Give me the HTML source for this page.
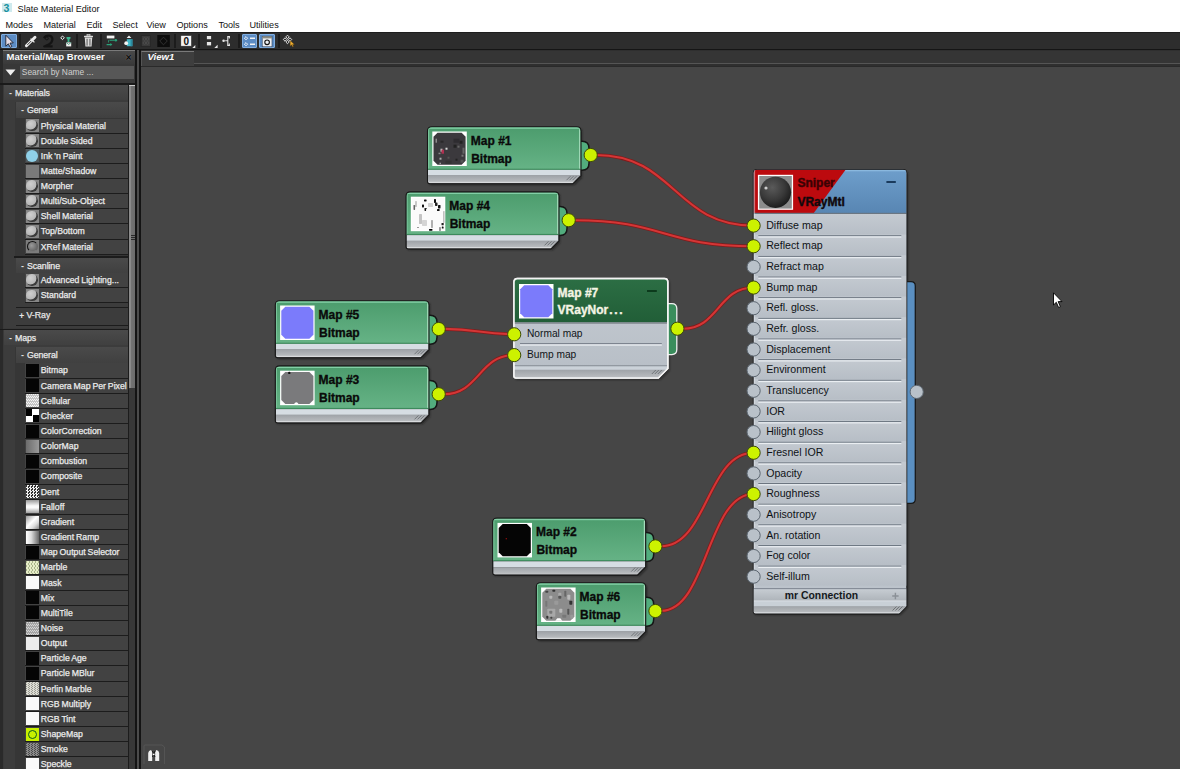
<!DOCTYPE html><html><head><meta charset="utf-8"><style>
*{margin:0;padding:0;box-sizing:border-box}
html,body{width:1180px;height:769px;overflow:hidden;background:#464646;font-family:"Liberation Sans",sans-serif}
.ab{position:absolute}
.t{position:absolute;white-space:nowrap;line-height:1}
.lt{color:#e6e6e6;font-size:9px}

</style></head><body>
<div class="ab" style="left:0px;top:0px;width:1180px;height:32px;background:#fff"></div>
<div class="ab" style="left:2px;top:2.5px;width:10.2px;height:9.8px;background:#cfeaee"></div>
<div class="t" style="left:3.6px;top:2.6px;font-size:10.5px;font-weight:bold;color:#17909e">3</div>
<div class="t" style="left:17.6px;top:4.9px;font-size:9.1px;color:#111">Slate Material Editor</div>
<div class="t" style="left:5.4px;top:20.5px;font-size:9.1px;color:#111">Modes</div>
<div class="t" style="left:43.4px;top:20.5px;font-size:9.1px;color:#111">Material</div>
<div class="t" style="left:86.4px;top:20.5px;font-size:9.1px;color:#111">Edit</div>
<div class="t" style="left:112.4px;top:20.5px;font-size:9.1px;color:#111">Select</div>
<div class="t" style="left:146.4px;top:20.5px;font-size:9.1px;color:#111">View</div>
<div class="t" style="left:176.4px;top:20.5px;font-size:9.1px;color:#111">Options</div>
<div class="t" style="left:218.4px;top:20.5px;font-size:9.1px;color:#111">Tools</div>
<div class="t" style="left:249.4px;top:20.5px;font-size:9.1px;color:#111">Utilities</div>
<div class="ab" style="left:0px;top:32px;width:1180px;height:18px;background:#2d2d2d"></div>
<div class="ab" style="left:0px;top:32px;width:1180px;height:1px;background:#1e1e1e"></div>
<div class="ab" style="left:0px;top:49px;width:1180px;height:1px;background:#151515"></div>
<div class="ab" style="left:19px;top:34px;width:2px;height:14px;background:#1c1c1c"></div>
<div class="ab" style="left:76px;top:34px;width:2px;height:14px;background:#1c1c1c"></div>
<div class="ab" style="left:100px;top:34px;width:2px;height:14px;background:#1c1c1c"></div>
<div class="ab" style="left:174px;top:34px;width:2px;height:14px;background:#1c1c1c"></div>
<div class="ab" style="left:198px;top:34px;width:2px;height:14px;background:#1c1c1c"></div>
<div class="ab" style="left:238px;top:34px;width:2px;height:14px;background:#1c1c1c"></div>
<div class="ab" style="left:278px;top:34px;width:2px;height:14px;background:#1c1c1c"></div>
<div class="ab" style="left:1px;top:33.8px;width:15.5px;height:14.5px;background:#5c8cc4;border:1px solid #80aee0;border-radius:1px"></div>
<div class="ab" style="left:241.7px;top:33.8px;width:15px;height:14.5px;background:#5c8cc4;border:1px solid #80aee0;border-radius:1px"></div>
<div class="ab" style="left:259.3px;top:33.8px;width:15.7px;height:14.5px;background:#5c8cc4;border:1px solid #80aee0;border-radius:1px"></div>

<svg class="ab" style="left:0;top:32px" width="300" height="18" viewBox="0 32 300 18">
 <!-- arrow -->
 <path d="M5.8 35.2 L5.8 46.2 L8.3 43.8 L10.2 47.4 L11.8 46.6 L10 43.1 L13.3 42.9 Z" fill="#e6dde6" stroke="#1c2230" stroke-width="0.9"/>
 <!-- eyedropper -->
 <path d="M26.4 45.8 L35 37.2" stroke="#ececec" stroke-width="2.9" stroke-linecap="round"/>
 <path d="M27.3 44.9 L31.2 41" stroke="#3a3a3a" stroke-width="1"/>
 <path d="M30.6 38.6 L34.4 42.4" stroke="#ececec" stroke-width="1.3"/>
 <!-- spiral dark -->
 <path d="M44 38.2 Q45.5 35.2 49 35.6 Q52.6 36.2 52.4 39.6 Q52 43 48.6 44.6 L44.2 46.4 L52.6 46.4" stroke="#141414" stroke-width="2.2" fill="none" stroke-linejoin="round"/>
 <circle cx="46.8" cy="38.4" r="1.5" fill="none" stroke="#141414" stroke-width="0.9"/>
 <!-- pick icon -->
 <path d="M62.5 36 L64.3 37.8 L62.5 39.6 L60.7 37.8 Z" fill="none" stroke="#f2f2f2" stroke-width="1"/>
 <path d="M66.5 37 L70.5 37 L70.5 38.5 L69.4 39.5 L69.4 42 L67.6 42 L67.6 39.5 L66.5 38.5 Z" fill="#3ab58e"/>
 <rect x="66.2" y="42.4" width="5" height="4" fill="#f4f4f4"/>
 <path d="M66.2 42.4 L68.7 44.4 L71.2 42.4" stroke="#2a8a6a" stroke-width="0.8" fill="none"/>
 <!-- trash -->
 <path d="M84.8 37.6 L92.2 37.6 L91.6 46.6 L85.4 46.6 Z" fill="#dcdcdc"/>
 <rect x="84" y="35.8" width="9" height="1.4" fill="#dcdcdc" rx="0.5"/>
 <rect x="87" y="34.6" width="3" height="1.3" fill="none" stroke="#dcdcdc" stroke-width="0.7"/>
 <rect x="86.6" y="38.8" width="0.9" height="6.8" fill="#444"/><rect x="89.5" y="38.8" width="0.9" height="6.8" fill="#444"/>
 <!-- layout icon -->
 <rect x="106.8" y="35.6" width="7.6" height="2.8" fill="#f0f0f0"/>
 <path d="M109.5 40.2 L114.5 40.2 M106.6 44.6 L111.4 44.6" stroke="#2aa47c" stroke-width="1.1"/>
 <circle cx="115.8" cy="40.2" r="1.3" fill="#2aa47c"/>
 <path d="M110.3 43.1 L112.3 44.6 L110.3 46.1 Z" fill="#2aa47c"/>
 <path d="M108.5 40.2 L108.5 42.5" stroke="#2aa47c" stroke-width="0.8"/>
 <!-- icon -->
 <path d="M129 35.5 L131.4 38 L126.6 38 Z" fill="#f0f0f0"/>
 <rect x="126.8" y="39.2" width="5.6" height="7" fill="#44b8c8"/>
 <rect x="130.5" y="39.2" width="1.9" height="7" fill="#2a8aa0"/>
 <circle cx="126.2" cy="43.2" r="1.9" fill="#f4f4f4"/>
 <!-- dim squares -->
 <rect x="141.2" y="35.6" width="9.4" height="11" fill="#3a3a3a" stroke="#262626" stroke-width="0.8"/>
 <circle cx="144.5" cy="39" r="1.4" fill="none" stroke="#555" stroke-width="0.6"/><circle cx="147.5" cy="39" r="1.4" fill="none" stroke="#555" stroke-width="0.6"/>
 <circle cx="144.5" cy="43" r="1.4" fill="none" stroke="#555" stroke-width="0.6"/><circle cx="147.5" cy="43" r="1.4" fill="none" stroke="#555" stroke-width="0.6"/>
 <rect x="157.3" y="35" width="12.5" height="12" fill="#0c0c0c"/>
 <path d="M163.5 37.2 L167.3 41 L163.5 44.8 L159.7 41 Z" fill="none" stroke="#3a3a3a" stroke-width="0.8"/>
 <!-- 0 button -->
 <rect x="180.8" y="35.4" width="10.8" height="10.8" fill="#f4f4f4" stroke="#222" stroke-width="0.6"/>
 <text x="186.2" y="44.6" font-family="Liberation Sans" font-weight="bold" font-size="10" text-anchor="middle" fill="#111">0</text>
 <path d="M192.3 48 L195.3 45 L195.3 48 Z" fill="#e6e6e6"/>
 <!-- two squares -->
 <rect x="206.9" y="36" width="4.2" height="3.2" fill="#e6e6e6"/>
 <rect x="206.9" y="42" width="4.2" height="3.4" fill="#e6e6e6"/>
 <path d="M214.3 48 L217.6 44.8 L217.6 48 Z" fill="#e6e6e6"/>
 <!-- tree icon -->
 <path d="M227.8 36.2 L227.8 45.8 M227.2 36.6 L229.8 36.6 M227.2 45.4 L229.8 45.4 M225.2 40.8 L227.8 40.8" stroke="#e6e6e6" stroke-width="1.1" fill="none"/>
 <path d="M229.3 36 L229.3 38.5 M229.3 43.5 L229.3 46" stroke="#e6e6e6" stroke-width="1.1"/>
 <circle cx="223.6" cy="40.8" r="1.3" fill="#e6e6e6"/>
 <!-- blue btn icons -->
 <g fill="none" stroke="#fff" stroke-width="0.9">
 <path d="M246 36.6 L247.6 38.2 L246 39.8 L244.4 38.2 Z"/><path d="M246 42.6 L247.6 44.2 L246 45.8 L244.4 44.2 Z"/>
 </g>
 <path d="M250 38.2 L255 38.2 M250 44.2 L255 44.2" stroke="#f4f4f4" stroke-width="1.4"/>
 <rect x="262.2" y="36.4" width="9.8" height="10.4" fill="#eef0f4" stroke="#2a3a50" stroke-width="0.6"/>
 <rect x="262.2" y="36.4" width="9.8" height="2" fill="#8a8a80"/>
 <circle cx="267.1" cy="42.3" r="2.3" fill="none" stroke="#111" stroke-width="1.1"/>
 <!-- last icon -->
 <g fill="none" stroke="#f0f0f0" stroke-width="0.9">
 <path d="M287.5 35.2 L289.2 36.9 L287.5 38.6 L285.8 36.9 Z"/><path d="M285 37.8 L286.7 39.5 L285 41.2 L283.3 39.5 Z"/>
 <path d="M290 37.8 L291.7 39.5 L290 41.2 L288.3 39.5 Z"/><path d="M287.5 40.3 L289.2 42 L287.5 43.7 L285.8 42 Z"/>
 </g>
 <path d="M290.2 40.6 L290.2 46 L291.6 44.8 L292.6 46.8 L293.4 46.4 L292.5 44.5 L294.3 44.4 Z" fill="#f2b030" stroke="#6a4a10" stroke-width="0.4"/>
</svg>

<div class="ab" style="left:0px;top:50px;width:141px;height:719px;background:#2a2a2a"></div>
<div class="ab" style="left:3px;top:50px;width:133px;height:14px;background:linear-gradient(#484848,#3a3a3a);border-top:1px solid #7a7a7a"></div>
<div class="t" style="left:6.6px;top:51.6px;font-size:9.5px;font-weight:bold;color:#fafafa">Material/Map Browser</div>
<div class="t" style="left:125.6px;top:51.6px;font-size:10.5px;font-weight:bold;color:#0c0c0c;text-shadow:0 0 1px #888">×</div>
<div class="ab" style="left:3px;top:64px;width:133px;height:19px;background:#383838"></div>
<svg class="ab" style="left:5px;top:69px" width="11" height="7"><path d="M0.5 0.5 L10.5 0.5 L5.5 6.5 Z" fill="#eee"/></svg>
<div class="ab" style="left:20px;top:66px;width:114px;height:13px;background:#575757"></div>
<div class="t" style="left:21.8px;top:68.2px;font-size:8.4px;color:#d0d0d0">Search by Name ...</div>
<div class="ab" style="left:0px;top:83px;width:136px;height:1.5px;background:#1a1a1a"></div>
<div class="ab" style="left:3px;top:84.5px;width:125px;height:684.5px;background:#393939"></div>
<div class="ab" style="left:127.6px;top:84.5px;width:1.4px;height:684.5px;background:#1c1c1c"></div>
<div class="ab" style="left:129px;top:84.5px;width:6px;height:684.5px;background:#383838"></div>
<div class="ab" style="left:129px;top:84.6px;width:6.5px;height:303.4px;background:linear-gradient(90deg,#8c8c8c,#888 30%,#727272 35%,#6a6a6a);border-top:1px solid #ccc"></div>
<div class="ab" style="left:131px;top:234.5px;width:4px;height:1px;background:#2a2a2a"></div>
<div class="ab" style="left:131px;top:237px;width:4px;height:1px;background:#2a2a2a"></div>
<div class="ab" style="left:131px;top:239.2px;width:4px;height:1px;background:#2a2a2a"></div>
<div class="ab" style="left:135px;top:50px;width:1.6px;height:719px;background:#141414"></div>
<div class="ab" style="left:136.6px;top:50px;width:2.5px;height:719px;background:#4c4c4c"></div>
<div class="ab" style="left:139.1px;top:50px;width:2px;height:719px;background:#141414"></div>
<div class="ab" style="left:4px;top:85px;width:123.6px;height:243px;background:#3c3c3c"></div>
<div class="ab" style="left:4px;top:85px;width:123.6px;height:15px;background:linear-gradient(#4a4a4a,#404040)"></div>
<div class="t" style="left:9px;top:88.5px;font-size:9px;color:#ddd;font-weight:bold">-</div>
<div class="t" style="left:15px;top:89.0px;font-size:8.8px;color:#f0f0f0;letter-spacing:-0.1px;-webkit-text-stroke:0.25px #e6e6e6">Materials</div>
<div class="ab" style="left:15px;top:101.5px;width:112.6px;height:155px;background:#363636"></div>
<div class="ab" style="left:16px;top:102px;width:111.6px;height:15.5px;background:linear-gradient(#4a4a4a,#404040)"></div>
<div class="t" style="left:21px;top:105.5px;font-size:9px;color:#ddd;font-weight:bold">-</div>
<div class="t" style="left:27px;top:106.0px;font-size:8.8px;color:#f0f0f0;letter-spacing:-0.1px;-webkit-text-stroke:0.25px #e6e6e6">General</div>
<div class="ab" style="left:25px;top:118.6px;width:102.6px;height:15.125px;background:#424242;border-bottom:1.5px solid #1c1c1c"></div>
<div class="ab" style="left:25.5px;top:119.19999999999999px;width:13px;height:13px;background:#868686"><div class="ab" style="left:0.8px;top:0.6px;width:11.4px;height:11.6px;border-radius:50%;background:radial-gradient(circle at 38% 34%,#cfcfcf,#b4b4b4 60%,#9a9a9a);box-shadow:inset -1.6px -1.6px 0.6px #3a3a3a"></div></div>
<div class="t" style="left:40.8px;top:121.6px;font-size:8.7px;color:#f0f0f0;word-spacing:-0.5px;-webkit-text-stroke:0.25px #e8e8e8">Physical Material</div>
<div class="ab" style="left:25px;top:133.725px;width:102.6px;height:15.125px;background:#424242;border-bottom:1.5px solid #1c1c1c"></div>
<div class="ab" style="left:25.5px;top:134.325px;width:13px;height:13px;background:#868686"><div class="ab" style="left:0.8px;top:0.6px;width:11.4px;height:11.6px;border-radius:50%;background:radial-gradient(circle at 38% 34%,#cfcfcf,#b4b4b4 60%,#9a9a9a);box-shadow:inset -1.6px -1.6px 0.6px #3a3a3a"></div></div>
<div class="t" style="left:40.8px;top:136.725px;font-size:8.7px;color:#f0f0f0;word-spacing:-0.5px;-webkit-text-stroke:0.25px #e8e8e8">Double Sided</div>
<div class="ab" style="left:25px;top:148.85px;width:102.6px;height:15.125px;background:#424242;border-bottom:1.5px solid #1c1c1c"></div>
<div class="ab" style="left:25.5px;top:149.45px;width:13px;height:13px;background:#505a5e"><div class="ab" style="left:0.5px;top:0.5px;width:12px;height:12px;border-radius:50%;background:#8fd0e8"></div></div>
<div class="t" style="left:40.8px;top:151.85px;font-size:8.7px;color:#f0f0f0;word-spacing:-0.5px;-webkit-text-stroke:0.25px #e8e8e8">Ink 'n Paint</div>
<div class="ab" style="left:25px;top:163.975px;width:102.6px;height:15.125px;background:#424242;border-bottom:1.5px solid #1c1c1c"></div>
<div class="ab" style="left:25.5px;top:164.575px;width:13px;height:13px;background:#7a7a7a"></div>
<div class="t" style="left:40.8px;top:166.975px;font-size:8.7px;color:#f0f0f0;word-spacing:-0.5px;-webkit-text-stroke:0.25px #e8e8e8">Matte/Shadow</div>
<div class="ab" style="left:25px;top:179.1px;width:102.6px;height:15.125px;background:#424242;border-bottom:1.5px solid #1c1c1c"></div>
<div class="ab" style="left:25.5px;top:179.7px;width:13px;height:13px;background:#868686"><div class="ab" style="left:0.8px;top:0.6px;width:11.4px;height:11.6px;border-radius:50%;background:radial-gradient(circle at 38% 34%,#cfcfcf,#b4b4b4 60%,#9a9a9a);box-shadow:inset -1.6px -1.6px 0.6px #3a3a3a"></div></div>
<div class="t" style="left:40.8px;top:182.1px;font-size:8.7px;color:#f0f0f0;word-spacing:-0.5px;-webkit-text-stroke:0.25px #e8e8e8">Morpher</div>
<div class="ab" style="left:25px;top:194.225px;width:102.6px;height:15.125px;background:#424242;border-bottom:1.5px solid #1c1c1c"></div>
<div class="ab" style="left:25.5px;top:194.825px;width:13px;height:13px;background:#868686"><div class="ab" style="left:0.8px;top:0.6px;width:11.4px;height:11.6px;border-radius:50%;background:radial-gradient(circle at 38% 34%,#cfcfcf,#b4b4b4 60%,#9a9a9a);box-shadow:inset -1.6px -1.6px 0.6px #3a3a3a"></div></div>
<div class="t" style="left:40.8px;top:197.225px;font-size:8.7px;color:#f0f0f0;word-spacing:-0.5px;-webkit-text-stroke:0.25px #e8e8e8">Multi/Sub-Object</div>
<div class="ab" style="left:25px;top:209.35px;width:102.6px;height:15.125px;background:#424242;border-bottom:1.5px solid #1c1c1c"></div>
<div class="ab" style="left:25.5px;top:209.95px;width:13px;height:13px;background:#868686"><div class="ab" style="left:0.8px;top:0.6px;width:11.4px;height:11.6px;border-radius:50%;background:radial-gradient(circle at 38% 34%,#cfcfcf,#b4b4b4 60%,#9a9a9a);box-shadow:inset -1.6px -1.6px 0.6px #3a3a3a"></div></div>
<div class="t" style="left:40.8px;top:212.35px;font-size:8.7px;color:#f0f0f0;word-spacing:-0.5px;-webkit-text-stroke:0.25px #e8e8e8">Shell Material</div>
<div class="ab" style="left:25px;top:224.475px;width:102.6px;height:15.125px;background:#424242;border-bottom:1.5px solid #1c1c1c"></div>
<div class="ab" style="left:25.5px;top:225.075px;width:13px;height:13px;background:#868686"><div class="ab" style="left:0.8px;top:0.6px;width:11.4px;height:11.6px;border-radius:50%;background:radial-gradient(circle at 38% 34%,#cfcfcf,#b4b4b4 60%,#9a9a9a);box-shadow:inset -1.6px -1.6px 0.6px #3a3a3a"></div></div>
<div class="t" style="left:40.8px;top:227.475px;font-size:8.7px;color:#f0f0f0;word-spacing:-0.5px;-webkit-text-stroke:0.25px #e8e8e8">Top/Bottom</div>
<div class="ab" style="left:25px;top:239.6px;width:102.6px;height:15.125px;background:#424242;border-bottom:1.5px solid #1c1c1c"></div>
<div class="ab" style="left:25.5px;top:240.2px;width:13px;height:13px;background:#7c7c7c"><div class="ab" style="left:1.2px;top:1px;width:11px;height:11px;border-radius:50%;border:1px solid #111;border-right-color:#666;border-bottom-color:#777;background:radial-gradient(circle at 40% 40%,#9a9a9a,#6a6a6a 70%)"></div></div>
<div class="t" style="left:40.8px;top:242.6px;font-size:8.7px;color:#f0f0f0;word-spacing:-0.5px;-webkit-text-stroke:0.25px #e8e8e8">XRef Material</div>
<div class="ab" style="left:14px;top:256px;width:113.6px;height:1.8px;background:#1c1c1c"></div>
<div class="ab" style="left:16px;top:258px;width:111.6px;height:15px;background:linear-gradient(#4a4a4a,#404040)"></div>
<div class="t" style="left:21px;top:261.5px;font-size:9px;color:#ddd;font-weight:bold">-</div>
<div class="t" style="left:27px;top:262.0px;font-size:8.8px;color:#f0f0f0;letter-spacing:-0.1px;-webkit-text-stroke:0.25px #e6e6e6">Scanline</div>
<div class="ab" style="left:25px;top:273.2px;width:102.6px;height:15.125px;background:#424242;border-bottom:1.5px solid #1c1c1c"></div>
<div class="ab" style="left:25.5px;top:273.8px;width:13px;height:13px;background:#868686"><div class="ab" style="left:0.8px;top:0.6px;width:11.4px;height:11.6px;border-radius:50%;background:radial-gradient(circle at 38% 34%,#cfcfcf,#b4b4b4 60%,#9a9a9a);box-shadow:inset -1.6px -1.6px 0.6px #3a3a3a"></div></div>
<div class="t" style="left:40.8px;top:276.2px;font-size:8.7px;color:#f0f0f0;word-spacing:-0.5px;-webkit-text-stroke:0.25px #e8e8e8">Advanced Lighting...</div>
<div class="ab" style="left:25px;top:288.325px;width:102.6px;height:15.125px;background:#424242;border-bottom:1.5px solid #1c1c1c"></div>
<div class="ab" style="left:25.5px;top:288.925px;width:13px;height:13px;background:#868686"><div class="ab" style="left:0.8px;top:0.6px;width:11.4px;height:11.6px;border-radius:50%;background:radial-gradient(circle at 38% 34%,#cfcfcf,#b4b4b4 60%,#9a9a9a);box-shadow:inset -1.6px -1.6px 0.6px #3a3a3a"></div></div>
<div class="t" style="left:40.8px;top:291.325px;font-size:8.7px;color:#f0f0f0;word-spacing:-0.5px;-webkit-text-stroke:0.25px #e8e8e8">Standard</div>
<div class="ab" style="left:16px;top:306.5px;width:111.6px;height:19px;background:#3c3c3c;border-top:1.5px solid #1c1c1c;border-bottom:1.5px solid #1c1c1c"></div>
<div class="t" style="left:19px;top:311.5px;font-size:9px;color:#e6e6e6;font-weight:bold">+</div>
<div class="t" style="left:26.4px;top:311.2px;font-size:8.8px;color:#ececec;-webkit-text-stroke:0.25px #e0e0e0">V-Ray</div>
<div class="ab" style="left:0px;top:328.5px;width:128px;height:1.5px;background:#1a1a1a"></div>
<div class="ab" style="left:4px;top:330px;width:123.6px;height:439px;background:#3c3c3c"></div>
<div class="ab" style="left:4px;top:330px;width:123.6px;height:15px;background:linear-gradient(#4a4a4a,#404040)"></div>
<div class="t" style="left:9px;top:333.5px;font-size:9px;color:#ddd;font-weight:bold">-</div>
<div class="t" style="left:15px;top:334.0px;font-size:8.8px;color:#f0f0f0;letter-spacing:-0.1px;-webkit-text-stroke:0.25px #e6e6e6">Maps</div>
<div class="ab" style="left:15px;top:346.5px;width:112.6px;height:423px;background:#363636"></div>
<div class="ab" style="left:16px;top:347px;width:111.6px;height:15.5px;background:linear-gradient(#4a4a4a,#404040)"></div>
<div class="t" style="left:21px;top:350.5px;font-size:9px;color:#ddd;font-weight:bold">-</div>
<div class="t" style="left:27px;top:351.0px;font-size:8.8px;color:#f0f0f0;letter-spacing:-0.1px;-webkit-text-stroke:0.25px #e6e6e6">General</div>
<div class="ab" style="left:25px;top:363.4px;width:102.6px;height:15.15px;background:#424242;border-bottom:1.5px solid #1c1c1c"></div>
<div class="ab" style="left:25.5px;top:364.0px;width:13px;height:13px;background:#050505"></div>
<div class="t" style="left:40.8px;top:366.4px;font-size:8.7px;color:#f0f0f0;word-spacing:-0.5px;-webkit-text-stroke:0.25px #e8e8e8">Bitmap</div>
<div class="ab" style="left:25px;top:378.54999999999995px;width:102.6px;height:15.15px;background:#424242;border-bottom:1.5px solid #1c1c1c"></div>
<div class="ab" style="left:25.5px;top:379.15px;width:13px;height:13px;background:#050505"></div>
<div class="t" style="left:40.8px;top:381.54999999999995px;font-size:8.7px;color:#f0f0f0;word-spacing:-0.5px;-webkit-text-stroke:0.25px #e8e8e8">Camera Map Per Pixel</div>
<div class="ab" style="left:25px;top:393.7px;width:102.6px;height:15.15px;background:#424242;border-bottom:1.5px solid #1c1c1c"></div>
<div class="ab" style="left:25.5px;top:394.3px;width:13px;height:13px;background:repeating-conic-gradient(#f4f4f4 0 25%,#c4c4c4 0 50%) 0 0/2px 3px"></div>
<div class="t" style="left:40.8px;top:396.7px;font-size:8.7px;color:#f0f0f0;word-spacing:-0.5px;-webkit-text-stroke:0.25px #e8e8e8">Cellular</div>
<div class="ab" style="left:25px;top:408.84999999999997px;width:102.6px;height:15.15px;background:#424242;border-bottom:1.5px solid #1c1c1c"></div>
<div class="ab" style="left:25.5px;top:409.45px;width:13px;height:13px;background:conic-gradient(#fff 0 25%,#000 0 50%,#fff 0 75%,#000 0)"></div>
<div class="t" style="left:40.8px;top:411.84999999999997px;font-size:8.7px;color:#f0f0f0;word-spacing:-0.5px;-webkit-text-stroke:0.25px #e8e8e8">Checker</div>
<div class="ab" style="left:25px;top:424.0px;width:102.6px;height:15.15px;background:#424242;border-bottom:1.5px solid #1c1c1c"></div>
<div class="ab" style="left:25.5px;top:424.6px;width:13px;height:13px;background:#050505"></div>
<div class="t" style="left:40.8px;top:427.0px;font-size:8.7px;color:#f0f0f0;word-spacing:-0.5px;-webkit-text-stroke:0.25px #e8e8e8">ColorCorrection</div>
<div class="ab" style="left:25px;top:439.15px;width:102.6px;height:15.15px;background:#424242;border-bottom:1.5px solid #1c1c1c"></div>
<div class="ab" style="left:25.5px;top:439.75px;width:13px;height:13px;background:linear-gradient(90deg,#6c6c6c,#9a9a9a)"></div>
<div class="t" style="left:40.8px;top:442.15px;font-size:8.7px;color:#f0f0f0;word-spacing:-0.5px;-webkit-text-stroke:0.25px #e8e8e8">ColorMap</div>
<div class="ab" style="left:25px;top:454.29999999999995px;width:102.6px;height:15.15px;background:#424242;border-bottom:1.5px solid #1c1c1c"></div>
<div class="ab" style="left:25.5px;top:454.9px;width:13px;height:13px;background:#050505"></div>
<div class="t" style="left:40.8px;top:457.29999999999995px;font-size:8.7px;color:#f0f0f0;word-spacing:-0.5px;-webkit-text-stroke:0.25px #e8e8e8">Combustion</div>
<div class="ab" style="left:25px;top:469.45px;width:102.6px;height:15.15px;background:#424242;border-bottom:1.5px solid #1c1c1c"></div>
<div class="ab" style="left:25.5px;top:470.05px;width:13px;height:13px;background:#050505"></div>
<div class="t" style="left:40.8px;top:472.45px;font-size:8.7px;color:#f0f0f0;word-spacing:-0.5px;-webkit-text-stroke:0.25px #e8e8e8">Composite</div>
<div class="ab" style="left:25px;top:484.59999999999997px;width:102.6px;height:15.15px;background:#424242;border-bottom:1.5px solid #1c1c1c"></div>
<div class="ab" style="left:25.5px;top:485.2px;width:13px;height:13px;background:repeating-conic-gradient(#f0f0f0 0 25%,#303030 0 50%) 0 0/3px 3px"></div>
<div class="t" style="left:40.8px;top:487.59999999999997px;font-size:8.7px;color:#f0f0f0;word-spacing:-0.5px;-webkit-text-stroke:0.25px #e8e8e8">Dent</div>
<div class="ab" style="left:25px;top:499.75px;width:102.6px;height:15.15px;background:#424242;border-bottom:1.5px solid #1c1c1c"></div>
<div class="ab" style="left:25.5px;top:500.35px;width:13px;height:13px;background:linear-gradient(#9a9a9a,#fafafa 45%,#fafafa 60%,#a0a0a0)"></div>
<div class="t" style="left:40.8px;top:502.75px;font-size:8.7px;color:#f0f0f0;word-spacing:-0.5px;-webkit-text-stroke:0.25px #e8e8e8">Falloff</div>
<div class="ab" style="left:25px;top:514.9px;width:102.6px;height:15.15px;background:#424242;border-bottom:1.5px solid #1c1c1c"></div>
<div class="ab" style="left:25.5px;top:515.5px;width:13px;height:13px;background:linear-gradient(135deg,#999,#fff 45%,#ddd 70%,#888)"></div>
<div class="t" style="left:40.8px;top:517.9px;font-size:8.7px;color:#f0f0f0;word-spacing:-0.5px;-webkit-text-stroke:0.25px #e8e8e8">Gradient</div>
<div class="ab" style="left:25px;top:530.05px;width:102.6px;height:15.15px;background:#424242;border-bottom:1.5px solid #1c1c1c"></div>
<div class="ab" style="left:25.5px;top:530.65px;width:13px;height:13px;background:linear-gradient(90deg,#fff,#ddd 40%,#666)"></div>
<div class="t" style="left:40.8px;top:533.05px;font-size:8.7px;color:#f0f0f0;word-spacing:-0.5px;-webkit-text-stroke:0.25px #e8e8e8">Gradient Ramp</div>
<div class="ab" style="left:25px;top:545.2px;width:102.6px;height:15.15px;background:#424242;border-bottom:1.5px solid #1c1c1c"></div>
<div class="ab" style="left:25.5px;top:545.8000000000001px;width:13px;height:13px;background:#050505"></div>
<div class="t" style="left:40.8px;top:548.2px;font-size:8.7px;color:#f0f0f0;word-spacing:-0.5px;-webkit-text-stroke:0.25px #e8e8e8">Map Output Selector</div>
<div class="ab" style="left:25px;top:560.35px;width:102.6px;height:15.15px;background:#424242;border-bottom:1.5px solid #1c1c1c"></div>
<div class="ab" style="left:25.5px;top:560.95px;width:13px;height:13px;background:repeating-conic-gradient(#e6ecc8 0 25%,#a8b48a 0 50%) 0 0/3px 4px"></div>
<div class="t" style="left:40.8px;top:563.35px;font-size:8.7px;color:#f0f0f0;word-spacing:-0.5px;-webkit-text-stroke:0.25px #e8e8e8">Marble</div>
<div class="ab" style="left:25px;top:575.5px;width:102.6px;height:15.15px;background:#424242;border-bottom:1.5px solid #1c1c1c"></div>
<div class="ab" style="left:25.5px;top:576.1px;width:13px;height:13px;background:#fafafa"></div>
<div class="t" style="left:40.8px;top:578.5px;font-size:8.7px;color:#f0f0f0;word-spacing:-0.5px;-webkit-text-stroke:0.25px #e8e8e8">Mask</div>
<div class="ab" style="left:25px;top:590.65px;width:102.6px;height:15.15px;background:#424242;border-bottom:1.5px solid #1c1c1c"></div>
<div class="ab" style="left:25.5px;top:591.25px;width:13px;height:13px;background:#050505"></div>
<div class="t" style="left:40.8px;top:593.65px;font-size:8.7px;color:#f0f0f0;word-spacing:-0.5px;-webkit-text-stroke:0.25px #e8e8e8">Mix</div>
<div class="ab" style="left:25px;top:605.8px;width:102.6px;height:15.15px;background:#424242;border-bottom:1.5px solid #1c1c1c"></div>
<div class="ab" style="left:25.5px;top:606.4px;width:13px;height:13px;background:#050505"></div>
<div class="t" style="left:40.8px;top:608.8px;font-size:8.7px;color:#f0f0f0;word-spacing:-0.5px;-webkit-text-stroke:0.25px #e8e8e8">MultiTile</div>
<div class="ab" style="left:25px;top:620.95px;width:102.6px;height:15.15px;background:#424242;border-bottom:1.5px solid #1c1c1c"></div>
<div class="ab" style="left:25.5px;top:621.5500000000001px;width:13px;height:13px;background:repeating-conic-gradient(#d4d4d4 0 25%,#a4a4a4 0 50%) 0 0/2px 3px"></div>
<div class="t" style="left:40.8px;top:623.95px;font-size:8.7px;color:#f0f0f0;word-spacing:-0.5px;-webkit-text-stroke:0.25px #e8e8e8">Noise</div>
<div class="ab" style="left:25px;top:636.0999999999999px;width:102.6px;height:15.15px;background:#424242;border-bottom:1.5px solid #1c1c1c"></div>
<div class="ab" style="left:25.5px;top:636.6999999999999px;width:13px;height:13px;background:#ececec"></div>
<div class="t" style="left:40.8px;top:639.0999999999999px;font-size:8.7px;color:#f0f0f0;word-spacing:-0.5px;-webkit-text-stroke:0.25px #e8e8e8">Output</div>
<div class="ab" style="left:25px;top:651.25px;width:102.6px;height:15.15px;background:#424242;border-bottom:1.5px solid #1c1c1c"></div>
<div class="ab" style="left:25.5px;top:651.85px;width:13px;height:13px;background:#050505"></div>
<div class="t" style="left:40.8px;top:654.25px;font-size:8.7px;color:#f0f0f0;word-spacing:-0.5px;-webkit-text-stroke:0.25px #e8e8e8">Particle Age</div>
<div class="ab" style="left:25px;top:666.4px;width:102.6px;height:15.15px;background:#424242;border-bottom:1.5px solid #1c1c1c"></div>
<div class="ab" style="left:25.5px;top:667.0px;width:13px;height:13px;background:#050505"></div>
<div class="t" style="left:40.8px;top:669.4px;font-size:8.7px;color:#f0f0f0;word-spacing:-0.5px;-webkit-text-stroke:0.25px #e8e8e8">Particle MBlur</div>
<div class="ab" style="left:25px;top:681.55px;width:102.6px;height:15.15px;background:#424242;border-bottom:1.5px solid #1c1c1c"></div>
<div class="ab" style="left:25.5px;top:682.15px;width:13px;height:13px;background:repeating-conic-gradient(#dcdcd4 0 25%,#9a9a90 0 50%) 0 0/3px 2px"></div>
<div class="t" style="left:40.8px;top:684.55px;font-size:8.7px;color:#f0f0f0;word-spacing:-0.5px;-webkit-text-stroke:0.25px #e8e8e8">Perlin Marble</div>
<div class="ab" style="left:25px;top:696.7px;width:102.6px;height:15.15px;background:#424242;border-bottom:1.5px solid #1c1c1c"></div>
<div class="ab" style="left:25.5px;top:697.3000000000001px;width:13px;height:13px;background:#fafafa"></div>
<div class="t" style="left:40.8px;top:699.7px;font-size:8.7px;color:#f0f0f0;word-spacing:-0.5px;-webkit-text-stroke:0.25px #e8e8e8">RGB Multiply</div>
<div class="ab" style="left:25px;top:711.8499999999999px;width:102.6px;height:15.15px;background:#424242;border-bottom:1.5px solid #1c1c1c"></div>
<div class="ab" style="left:25.5px;top:712.4499999999999px;width:13px;height:13px;background:#fafafa"></div>
<div class="t" style="left:40.8px;top:714.8499999999999px;font-size:8.7px;color:#f0f0f0;word-spacing:-0.5px;-webkit-text-stroke:0.25px #e8e8e8">RGB Tint</div>
<div class="ab" style="left:25px;top:727.0px;width:102.6px;height:15.15px;background:#424242;border-bottom:1.5px solid #1c1c1c"></div>
<div class="ab" style="left:25.5px;top:727.6px;width:13px;height:13px;background:#c8f000"><div class="ab" style="left:2px;top:2px;width:9px;height:9px;border-radius:50%;border:1.6px solid #0a5a20"></div></div>
<div class="t" style="left:40.8px;top:730.0px;font-size:8.7px;color:#f0f0f0;word-spacing:-0.5px;-webkit-text-stroke:0.25px #e8e8e8">ShapeMap</div>
<div class="ab" style="left:25px;top:742.15px;width:102.6px;height:15.15px;background:#424242;border-bottom:1.5px solid #1c1c1c"></div>
<div class="ab" style="left:25.5px;top:742.75px;width:13px;height:13px;background:repeating-conic-gradient(#8a8a8a 0 25%,#4a4a4a 0 50%) 0 0/3px 2px"></div>
<div class="t" style="left:40.8px;top:745.15px;font-size:8.7px;color:#f0f0f0;word-spacing:-0.5px;-webkit-text-stroke:0.25px #e8e8e8">Smoke</div>
<div class="ab" style="left:25px;top:757.3px;width:102.6px;height:15.15px;background:#424242;border-bottom:1.5px solid #1c1c1c"></div>
<div class="ab" style="left:25.5px;top:757.9px;width:13px;height:13px;background:#fafafa"></div>
<div class="t" style="left:40.8px;top:760.3px;font-size:8.7px;color:#f0f0f0;word-spacing:-0.5px;-webkit-text-stroke:0.25px #e8e8e8">Speckle</div>
<div class="ab" style="left:141px;top:50px;width:1039px;height:16.5px;background:#2f2f2f"></div>
<div class="ab" style="left:194px;top:51px;width:986px;height:13px;background:#353535;border-bottom:1px solid #555"></div>
<div class="ab" style="left:141px;top:50.5px;width:53px;height:15px;background:#3e3e3e;border-top:1px solid #7a7a7a;border-left:1px solid #555"></div>
<div class="t" style="left:147.5px;top:51.8px;font-size:9.6px;font-weight:bold;font-style:italic;color:#fafafa">View1</div>
<div class="ab" style="left:141px;top:65.5px;width:1039px;height:1px;background:#2a2a2a"></div>
<svg class="ab" style="left:0;top:0" width="1180" height="769" viewBox="0 0 1180 769">
<defs>
<linearGradient id="gGreen" x1="0" y1="0" x2="0" y2="1"><stop offset="0" stop-color="#4c9c6d"/><stop offset="1" stop-color="#66b386"/></linearGradient>
<linearGradient id="gFoot" x1="0" y1="0" x2="0" y2="1"><stop offset="0" stop-color="#9fa3a8"/><stop offset="1" stop-color="#b9bcbf"/></linearGradient>
<linearGradient id="gRow" x1="0" y1="0" x2="0" y2="1"><stop offset="0" stop-color="#c4cad1"/><stop offset="1" stop-color="#b7bec6"/></linearGradient>
<linearGradient id="gBlue" x1="0" y1="0" x2="0" y2="1"><stop offset="0" stop-color="#6e9ecb"/><stop offset="1" stop-color="#5886b3"/></linearGradient>
<linearGradient id="gDG" x1="0" y1="0" x2="0" y2="1"><stop offset="0" stop-color="#2c6e44"/><stop offset="1" stop-color="#215e37"/></linearGradient>
<linearGradient id="gMr" x1="0" y1="0" x2="0" y2="1"><stop offset="0" stop-color="#c6ccd2"/><stop offset="1" stop-color="#aeb4ba"/></linearGradient>
<radialGradient id="gSph" cx="0.4" cy="0.35" r="0.65"><stop offset="0" stop-color="#5a5a5a"/><stop offset="0.6" stop-color="#3a3a3a"/><stop offset="1" stop-color="#1e1e1e"/></radialGradient>
<filter id="sh" x="-5%" y="-5%" width="110%" height="115%"><feGaussianBlur stdDeviation="1.2"/></filter>
</defs>
<path d="M596,155.0 C674.8,155.0 674.8,225.6 753.6,225.6" fill="none" stroke="#801a1a" stroke-width="3.5"/>
<path d="M596,155.0 C674.8,155.0 674.8,225.6 753.6,225.6" fill="none" stroke="#d43636" stroke-width="2.1"/>
<path d="M574,220.2 C663.8,220.2 663.8,246.25 753.6,246.25" fill="none" stroke="#801a1a" stroke-width="3.5"/>
<path d="M574,220.2 C663.8,220.2 663.8,246.25 753.6,246.25" fill="none" stroke="#d43636" stroke-width="2.1"/>
<path d="M444,328.9 C479.1,328.9 479.1,334.2 514.2,334.2" fill="none" stroke="#801a1a" stroke-width="3.5"/>
<path d="M444,328.9 C479.1,328.9 479.1,334.2 514.2,334.2" fill="none" stroke="#d43636" stroke-width="2.1"/>
<path d="M444,394.1 C479.1,394.1 479.1,355.1 514.2,355.1" fill="none" stroke="#801a1a" stroke-width="3.5"/>
<path d="M444,394.1 C479.1,394.1 479.1,355.1 514.2,355.1" fill="none" stroke="#d43636" stroke-width="2.1"/>
<path d="M683,328.7 C718.3,328.7 718.3,287.55 753.6,287.55" fill="none" stroke="#801a1a" stroke-width="3.5"/>
<path d="M683,328.7 C718.3,328.7 718.3,287.55 753.6,287.55" fill="none" stroke="#d43636" stroke-width="2.1"/>
<path d="M661,546.3 C707.3,546.3 707.3,452.75 753.6,452.75" fill="none" stroke="#801a1a" stroke-width="3.5"/>
<path d="M661,546.3 C707.3,546.3 707.3,452.75 753.6,452.75" fill="none" stroke="#d43636" stroke-width="2.1"/>
<path d="M661,610.8 C707.3,610.8 707.3,494.04999999999995 753.6,494.04999999999995" fill="none" stroke="#801a1a" stroke-width="3.5"/>
<path d="M661,610.8 C707.3,610.8 707.3,494.04999999999995 753.6,494.04999999999995" fill="none" stroke="#d43636" stroke-width="2.1"/>
<path d="M429,131.7 Q429,128.7 432,128.7 L579.0,128.7 Q582.0,128.7 582.0,131.7 L582.0,177.2 L574.5,184.7 L431,184.7 Q429,184.7 429,182.7 Z" fill="#151515" opacity="0.7" filter="url(#sh)"/>
<path d="M578.5,141.2 L582.0,141.2 Q589.0,141.2 589.0,148.2 L589.0,163.2 Q589.0,170.2 582.0,170.2 L578.5,170.2 Z" fill="#52ad7e" stroke="#161616" stroke-width="1.5"/>
<path d="M428,131.2 Q428,127.2 432,127.2 L576.5,127.2 Q580.5,127.2 580.5,131.2 L580.5,175.2 L572.5,183.2 L430,183.2 Q428,183.2 428,181.2 Z" fill="#1a1a1a" stroke="#181818" stroke-width="2.1"/>
<clipPath id="c1"><path d="M428,131.2 Q428,127.2 432,127.2 L576.5,127.2 Q580.5,127.2 580.5,131.2 L580.5,175.2 L572.5,183.2 L430,183.2 Q428,183.2 428,181.2 Z"/></clipPath>
<g clip-path="url(#c1)">
<rect x="428" y="127.2" width="152.5" height="42.5" fill="url(#gGreen)"/>
<rect x="428" y="127.2" width="152.5" height="1.6" fill="#82cfa6"/>
<rect x="428" y="127.2" width="1.2" height="42" fill="#78c49a"/>
<rect x="579.1" y="129.2" width="1.4" height="40" fill="#a6dcbc"/>
<rect x="428" y="168.7" width="152.5" height="1.2" fill="#3d8a5c"/>
<rect x="428" y="169.9" width="152.5" height="5.8" fill="#d6dde3"/>
<rect x="428" y="175.7" width="152.5" height="6.3" fill="url(#gFoot)"/>
<rect x="428" y="181.8" width="152.5" height="1.6" fill="#d8dadc"/>
</g>
<path d="M566.5,180.2 L570.5,176.2" stroke="#6a6e72" stroke-width="0.9"/>
<path d="M569.5,180.2 L573.5,176.2" stroke="#6a6e72" stroke-width="0.9"/>
<path d="M572.5,180.2 L576.5,176.2" stroke="#6a6e72" stroke-width="0.9"/>
<rect x="432.3" y="131.5" width="34.5" height="34.5" fill="#fff"/>
<path d="M437.5,132.7 L461.6,132.7 L465.6,136.7 L465.6,160.79999999999998 L461.6,164.79999999999998 L437.5,164.79999999999998 L433.5,160.79999999999998 L433.5,136.7 Z" fill="#3b393d"/>
<rect x="435.5" y="138.7" width="1.5" height="4" fill="#8a8a8a"/>
<rect x="440.5" y="140.7" width="3" height="2" fill="#2a282a"/>
<rect x="445.5" y="147.7" width="2" height="2" fill="#d8d8d8"/>
<rect x="440.5" y="148.7" width="2" height="3" fill="#c0c0c0"/>
<rect x="441.5" y="149.7" width="2.5" height="4" fill="#b03050"/>
<rect x="438.5" y="152.7" width="2" height="1.5" fill="#888"/>
<rect x="453.5" y="144.7" width="3" height="3" fill="#222"/>
<rect x="459.5" y="140.7" width="3" height="3" fill="#222"/>
<rect x="457.5" y="145.7" width="2" height="2" fill="#666"/>
<rect x="462.5" y="147.7" width="2" height="6" fill="#666"/>
<rect x="461.5" y="154.7" width="2" height="2" fill="#777"/>
<rect x="447.5" y="156.7" width="2" height="2" fill="#555"/>
<rect x="439.5" y="157.7" width="2" height="2" fill="#aaa"/>
<rect x="455.5" y="158.7" width="2" height="2" fill="#222"/>
<rect x="460.5" y="159.7" width="3" height="3" fill="#555"/>
<rect x="439.5" y="162.7" width="1.5" height="1.5" fill="#999"/>
<rect x="453.5" y="138.7" width="6" height="4" fill="#2e2c30"/>
<rect x="445.5" y="160.7" width="6" height="3" fill="#333"/>
<text x="470.8" y="144.8" font-family="Liberation Sans" font-weight="bold" font-size="12" fill="#0a0a0a" stroke="#0a0a0a" stroke-width="0.32">Map #1</text>
<text x="471.2" y="163.0" font-family="Liberation Sans" font-weight="bold" font-size="12" fill="#0a0a0a" stroke="#0a0a0a" stroke-width="0.32">Bitmap</text>
<path d="M407.5,196.9 Q407.5,193.9 410.5,193.9 L557.0,193.9 Q560.0,193.9 560.0,196.9 L560.0,242.4 L552.5,249.9 L409.5,249.9 Q407.5,249.9 407.5,247.9 Z" fill="#151515" opacity="0.7" filter="url(#sh)"/>
<path d="M556.5,206.4 L560.0,206.4 Q567.0,206.4 567.0,213.4 L567.0,228.4 Q567.0,235.4 560.0,235.4 L556.5,235.4 Z" fill="#52ad7e" stroke="#161616" stroke-width="1.5"/>
<path d="M406.5,196.4 Q406.5,192.4 410.5,192.4 L554.5,192.4 Q558.5,192.4 558.5,196.4 L558.5,240.4 L550.5,248.4 L408.5,248.4 Q406.5,248.4 406.5,246.4 Z" fill="#1a1a1a" stroke="#181818" stroke-width="2.1"/>
<clipPath id="c4"><path d="M406.5,196.4 Q406.5,192.4 410.5,192.4 L554.5,192.4 Q558.5,192.4 558.5,196.4 L558.5,240.4 L550.5,248.4 L408.5,248.4 Q406.5,248.4 406.5,246.4 Z"/></clipPath>
<g clip-path="url(#c4)">
<rect x="406.5" y="192.4" width="152.0" height="42.5" fill="url(#gGreen)"/>
<rect x="406.5" y="192.4" width="152.0" height="1.6" fill="#82cfa6"/>
<rect x="406.5" y="192.4" width="1.2" height="42" fill="#78c49a"/>
<rect x="557.1" y="194.4" width="1.4" height="40" fill="#a6dcbc"/>
<rect x="406.5" y="233.9" width="152.0" height="1.2" fill="#3d8a5c"/>
<rect x="406.5" y="235.10000000000002" width="152.0" height="5.8" fill="#d6dde3"/>
<rect x="406.5" y="240.9" width="152.0" height="6.3" fill="url(#gFoot)"/>
<rect x="406.5" y="247.0" width="152.0" height="1.6" fill="#d8dadc"/>
</g>
<path d="M544.5,245.4 L548.5,241.4" stroke="#6a6e72" stroke-width="0.9"/>
<path d="M547.5,245.4 L551.5,241.4" stroke="#6a6e72" stroke-width="0.9"/>
<path d="M550.5,245.4 L554.5,241.4" stroke="#6a6e72" stroke-width="0.9"/>
<rect x="410.8" y="196.70000000000002" width="34.5" height="34.5" fill="#fff"/>
<rect x="412.0" y="197.9" width="32.1" height="32.1" fill="#fbfbfb"/>
<rect x="415.0" y="200.9" width="2" height="6" fill="#c8c8c8" rx="0.6"/>
<rect x="428.0" y="202.9" width="5" height="4" fill="#d0d0d0" rx="0.6"/>
<rect x="419.0" y="213.9" width="3" height="10" fill="#c4c4c4" rx="0.6"/>
<rect x="422.0" y="219.9" width="5" height="6" fill="#d4d4d4" rx="0.6"/>
<rect x="431.0" y="219.9" width="2" height="8" fill="#b0b0b0" rx="0.6"/>
<rect x="443.0" y="210.9" width="1.6" height="12" fill="#c0c0c0" rx="0.6"/>
<rect x="439.0" y="226.9" width="2" height="4" fill="#999" rx="0.6"/>
<rect x="413.5" y="204.9" width="1.6" height="5" fill="#666" rx="0.6"/>
<rect x="424.0" y="199.4" width="2.6" height="2" fill="#111" rx="0.6"/>
<rect x="434.0" y="198.9" width="2" height="4" fill="#111" rx="0.6"/>
<rect x="435.0" y="202.4" width="2.5" height="3.5" fill="#222" rx="0.6"/>
<rect x="438.0" y="204.9" width="2.5" height="3.5" fill="#111" rx="0.6"/>
<rect x="422.0" y="204.4" width="2" height="3" fill="#111" rx="0.6"/>
<rect x="424.5" y="207.9" width="1.6" height="3" fill="#111" rx="0.6"/>
<rect x="437.0" y="208.9" width="2.6" height="2.2" fill="#111" rx="0.6"/>
<rect x="429.0" y="228.9" width="3.5" height="1.8" fill="#000" rx="0.6"/>
<rect x="441.5" y="222.9" width="2.2" height="2.4" fill="#222" rx="0.6"/>
<rect x="441.8" y="226.5" width="1.8" height="2" fill="#111" rx="0.6"/>
<rect x="426.0" y="207.9" width="1" height="1" fill="#444" rx="0.6"/>
<rect x="417.0" y="226.9" width="2" height="1" fill="#888" rx="0.6"/>
<text x="449.3" y="210.0" font-family="Liberation Sans" font-weight="bold" font-size="12" fill="#0a0a0a" stroke="#0a0a0a" stroke-width="0.32">Map #4</text>
<text x="449.7" y="228.2" font-family="Liberation Sans" font-weight="bold" font-size="12" fill="#0a0a0a" stroke="#0a0a0a" stroke-width="0.32">Bitmap</text>
<path d="M276.8,305.7 Q276.8,302.7 279.8,302.7 L427.0,302.7 Q430.0,302.7 430.0,305.7 L430.0,351.2 L422.5,358.7 L278.8,358.7 Q276.8,358.7 276.8,356.7 Z" fill="#151515" opacity="0.7" filter="url(#sh)"/>
<path d="M426.5,315.2 L430.0,315.2 Q437.0,315.2 437.0,322.2 L437.0,337.2 Q437.0,344.2 430.0,344.2 L426.5,344.2 Z" fill="#52ad7e" stroke="#161616" stroke-width="1.5"/>
<path d="M275.8,305.2 Q275.8,301.2 279.8,301.2 L424.5,301.2 Q428.5,301.2 428.5,305.2 L428.5,349.2 L420.5,357.2 L277.8,357.2 Q275.8,357.2 275.8,355.2 Z" fill="#1a1a1a" stroke="#181818" stroke-width="2.1"/>
<clipPath id="c5"><path d="M275.8,305.2 Q275.8,301.2 279.8,301.2 L424.5,301.2 Q428.5,301.2 428.5,305.2 L428.5,349.2 L420.5,357.2 L277.8,357.2 Q275.8,357.2 275.8,355.2 Z"/></clipPath>
<g clip-path="url(#c5)">
<rect x="275.8" y="301.2" width="152.7" height="42.5" fill="url(#gGreen)"/>
<rect x="275.8" y="301.2" width="152.7" height="1.6" fill="#82cfa6"/>
<rect x="275.8" y="301.2" width="1.2" height="42" fill="#78c49a"/>
<rect x="427.1" y="303.2" width="1.4" height="40" fill="#a6dcbc"/>
<rect x="275.8" y="342.7" width="152.7" height="1.2" fill="#3d8a5c"/>
<rect x="275.8" y="343.9" width="152.7" height="5.8" fill="#d6dde3"/>
<rect x="275.8" y="349.7" width="152.7" height="6.3" fill="url(#gFoot)"/>
<rect x="275.8" y="355.8" width="152.7" height="1.6" fill="#d8dadc"/>
</g>
<path d="M414.5,354.2 L418.5,350.2" stroke="#6a6e72" stroke-width="0.9"/>
<path d="M417.5,354.2 L421.5,350.2" stroke="#6a6e72" stroke-width="0.9"/>
<path d="M420.5,354.2 L424.5,350.2" stroke="#6a6e72" stroke-width="0.9"/>
<rect x="280.1" y="305.5" width="34.5" height="34.5" fill="#fff"/>
<path d="M285.3,306.7 L309.40000000000003,306.7 L313.40000000000003,310.7 L313.40000000000003,334.8 L309.40000000000003,338.8 L285.3,338.8 L281.3,334.8 L281.3,310.7 Z" fill="#7b7bfb"/>
<text x="318.6" y="318.8" font-family="Liberation Sans" font-weight="bold" font-size="12" fill="#0a0a0a" stroke="#0a0a0a" stroke-width="0.32">Map #5</text>
<text x="319.0" y="337.0" font-family="Liberation Sans" font-weight="bold" font-size="12" fill="#0a0a0a" stroke="#0a0a0a" stroke-width="0.32">Bitmap</text>
<path d="M276.8,370.9 Q276.8,367.9 279.8,367.9 L427.0,367.9 Q430.0,367.9 430.0,370.9 L430.0,416.4 L422.5,423.9 L278.8,423.9 Q276.8,423.9 276.8,421.9 Z" fill="#151515" opacity="0.7" filter="url(#sh)"/>
<path d="M426.5,380.4 L430.0,380.4 Q437.0,380.4 437.0,387.4 L437.0,402.4 Q437.0,409.4 430.0,409.4 L426.5,409.4 Z" fill="#52ad7e" stroke="#161616" stroke-width="1.5"/>
<path d="M275.8,370.4 Q275.8,366.4 279.8,366.4 L424.5,366.4 Q428.5,366.4 428.5,370.4 L428.5,414.4 L420.5,422.4 L277.8,422.4 Q275.8,422.4 275.8,420.4 Z" fill="#1a1a1a" stroke="#181818" stroke-width="2.1"/>
<clipPath id="c3"><path d="M275.8,370.4 Q275.8,366.4 279.8,366.4 L424.5,366.4 Q428.5,366.4 428.5,370.4 L428.5,414.4 L420.5,422.4 L277.8,422.4 Q275.8,422.4 275.8,420.4 Z"/></clipPath>
<g clip-path="url(#c3)">
<rect x="275.8" y="366.4" width="152.7" height="42.5" fill="url(#gGreen)"/>
<rect x="275.8" y="366.4" width="152.7" height="1.6" fill="#82cfa6"/>
<rect x="275.8" y="366.4" width="1.2" height="42" fill="#78c49a"/>
<rect x="427.1" y="368.4" width="1.4" height="40" fill="#a6dcbc"/>
<rect x="275.8" y="407.9" width="152.7" height="1.2" fill="#3d8a5c"/>
<rect x="275.8" y="409.09999999999997" width="152.7" height="5.8" fill="#d6dde3"/>
<rect x="275.8" y="414.9" width="152.7" height="6.3" fill="url(#gFoot)"/>
<rect x="275.8" y="421.0" width="152.7" height="1.6" fill="#d8dadc"/>
</g>
<path d="M414.5,419.4 L418.5,415.4" stroke="#6a6e72" stroke-width="0.9"/>
<path d="M417.5,419.4 L421.5,415.4" stroke="#6a6e72" stroke-width="0.9"/>
<path d="M420.5,419.4 L424.5,415.4" stroke="#6a6e72" stroke-width="0.9"/>
<rect x="280.1" y="370.7" width="34.5" height="34.5" fill="#fff"/>
<path d="M285.3,371.9 L309.40000000000003,371.9 L313.40000000000003,375.9 L313.40000000000003,400.0 L309.40000000000003,404.0 L285.3,404.0 L281.3,400.0 L281.3,375.9 Z" fill="#7a7a7c"/>
<circle cx="289.3" cy="372.9" r="1.2" fill="#111"/>
<path d="M293.8,404.5 Q296.3,400.0 298.8,404.5 Z" fill="#fff"/>
<text x="318.6" y="384.0" font-family="Liberation Sans" font-weight="bold" font-size="12" fill="#0a0a0a" stroke="#0a0a0a" stroke-width="0.32">Map #3</text>
<text x="319.0" y="402.2" font-family="Liberation Sans" font-weight="bold" font-size="12" fill="#0a0a0a" stroke="#0a0a0a" stroke-width="0.32">Bitmap</text>
<path d="M494.2,523.1 Q494.2,520.1 497.2,520.1 L643.7,520.1 Q646.7,520.1 646.7,523.1 L646.7,568.6 L639.2,576.1 L496.2,576.1 Q494.2,576.1 494.2,574.1 Z" fill="#151515" opacity="0.7" filter="url(#sh)"/>
<path d="M643.2,532.6 L646.7,532.6 Q653.7,532.6 653.7,539.6 L653.7,554.6 Q653.7,561.6 646.7,561.6 L643.2,561.6 Z" fill="#52ad7e" stroke="#161616" stroke-width="1.5"/>
<path d="M493.2,522.6 Q493.2,518.6 497.2,518.6 L641.2,518.6 Q645.2,518.6 645.2,522.6 L645.2,566.6 L637.2,574.6 L495.2,574.6 Q493.2,574.6 493.2,572.6 Z" fill="#1a1a1a" stroke="#181818" stroke-width="2.1"/>
<clipPath id="c2"><path d="M493.2,522.6 Q493.2,518.6 497.2,518.6 L641.2,518.6 Q645.2,518.6 645.2,522.6 L645.2,566.6 L637.2,574.6 L495.2,574.6 Q493.2,574.6 493.2,572.6 Z"/></clipPath>
<g clip-path="url(#c2)">
<rect x="493.2" y="518.6" width="152.00000000000006" height="42.5" fill="url(#gGreen)"/>
<rect x="493.2" y="518.6" width="152.00000000000006" height="1.6" fill="#82cfa6"/>
<rect x="493.2" y="518.6" width="1.2" height="42" fill="#78c49a"/>
<rect x="643.8000000000001" y="520.6" width="1.4" height="40" fill="#a6dcbc"/>
<rect x="493.2" y="560.1" width="152.00000000000006" height="1.2" fill="#3d8a5c"/>
<rect x="493.2" y="561.3000000000001" width="152.00000000000006" height="5.8" fill="#d6dde3"/>
<rect x="493.2" y="567.1" width="152.00000000000006" height="6.3" fill="url(#gFoot)"/>
<rect x="493.2" y="573.2" width="152.00000000000006" height="1.6" fill="#d8dadc"/>
</g>
<path d="M631.2,571.6 L635.2,567.6" stroke="#6a6e72" stroke-width="0.9"/>
<path d="M634.2,571.6 L638.2,567.6" stroke="#6a6e72" stroke-width="0.9"/>
<path d="M637.2,571.6 L641.2,567.6" stroke="#6a6e72" stroke-width="0.9"/>
<rect x="497.5" y="522.9" width="34.5" height="34.5" fill="#fff"/>
<path d="M502.7,524.1 L526.8,524.1 L530.8,528.1 L530.8,552.2 L526.8,556.2 L502.7,556.2 L498.7,552.2 L498.7,528.1 Z" fill="#050505"/>
<rect x="505.7" y="538.1" width="1.2" height="1.2" fill="#a01010"/>
<text x="536.0" y="536.2" font-family="Liberation Sans" font-weight="bold" font-size="12" fill="#0a0a0a" stroke="#0a0a0a" stroke-width="0.32">Map #2</text>
<text x="536.4" y="554.4" font-family="Liberation Sans" font-weight="bold" font-size="12" fill="#0a0a0a" stroke="#0a0a0a" stroke-width="0.32">Bitmap</text>
<path d="M537.8,587.7 Q537.8,584.7 540.8,584.7 L643.7,584.7 Q646.7,584.7 646.7,587.7 L646.7,633.2 L639.2,640.7 L539.8,640.7 Q537.8,640.7 537.8,638.7 Z" fill="#151515" opacity="0.7" filter="url(#sh)"/>
<path d="M643.2,597.2 L646.7,597.2 Q653.7,597.2 653.7,604.2 L653.7,619.2 Q653.7,626.2 646.7,626.2 L643.2,626.2 Z" fill="#52ad7e" stroke="#161616" stroke-width="1.5"/>
<path d="M536.8,587.2 Q536.8,583.2 540.8,583.2 L641.2,583.2 Q645.2,583.2 645.2,587.2 L645.2,631.2 L637.2,639.2 L538.8,639.2 Q536.8,639.2 536.8,637.2 Z" fill="#1a1a1a" stroke="#181818" stroke-width="2.1"/>
<clipPath id="c6"><path d="M536.8,587.2 Q536.8,583.2 540.8,583.2 L641.2,583.2 Q645.2,583.2 645.2,587.2 L645.2,631.2 L637.2,639.2 L538.8,639.2 Q536.8,639.2 536.8,637.2 Z"/></clipPath>
<g clip-path="url(#c6)">
<rect x="536.8" y="583.2" width="108.40000000000009" height="42.5" fill="url(#gGreen)"/>
<rect x="536.8" y="583.2" width="108.40000000000009" height="1.6" fill="#82cfa6"/>
<rect x="536.8" y="583.2" width="1.2" height="42" fill="#78c49a"/>
<rect x="643.8000000000001" y="585.2" width="1.4" height="40" fill="#a6dcbc"/>
<rect x="536.8" y="624.7" width="108.40000000000009" height="1.2" fill="#3d8a5c"/>
<rect x="536.8" y="625.9000000000001" width="108.40000000000009" height="5.8" fill="#d6dde3"/>
<rect x="536.8" y="631.7" width="108.40000000000009" height="6.3" fill="url(#gFoot)"/>
<rect x="536.8" y="637.8000000000001" width="108.40000000000009" height="1.6" fill="#d8dadc"/>
</g>
<path d="M631.2,636.2 L635.2,632.2" stroke="#6a6e72" stroke-width="0.9"/>
<path d="M634.2,636.2 L638.2,632.2" stroke="#6a6e72" stroke-width="0.9"/>
<path d="M637.2,636.2 L641.2,632.2" stroke="#6a6e72" stroke-width="0.9"/>
<rect x="541.0999999999999" y="587.5" width="34.5" height="34.5" fill="#fff"/>
<path d="M546.3,588.7 L570.4,588.7 L574.4,592.7 L574.4,616.8000000000001 L570.4,620.8000000000001 L546.3,620.8000000000001 L542.3,616.8000000000001 L542.3,592.7 Z" fill="#8c8c8c"/>
<rect x="545.3" y="590.7" width="3" height="2" fill="#444" rx="0.8"/>
<rect x="552.3" y="589.7" width="3" height="2" fill="#333" rx="0.8"/>
<rect x="558.3" y="592.7" width="3" height="4" fill="#aaa" rx="0.8"/>
<rect x="558.3" y="595.7" width="3" height="3" fill="#555" rx="0.8"/>
<rect x="564.3" y="590.7" width="2" height="6" fill="#666" rx="0.8"/>
<rect x="567.3" y="594.7" width="3" height="5" fill="#bbb" rx="0.8"/>
<rect x="569.3" y="600.7" width="3" height="4" fill="#333" rx="0.8"/>
<rect x="549.3" y="595.7" width="3" height="3" fill="#b8b8b8" rx="0.8"/>
<rect x="545.3" y="600.7" width="2" height="6" fill="#777" rx="0.8"/>
<rect x="554.3" y="600.7" width="4" height="4" fill="#9a9a9a" rx="0.8"/>
<rect x="547.3" y="608.7" width="8" height="8" fill="#a8a8a8" rx="0.8"/>
<rect x="549.3" y="610.7" width="3" height="3" fill="#777" rx="0.8"/>
<rect x="559.3" y="608.7" width="3" height="4" fill="#bbb" rx="0.8"/>
<rect x="567.3" y="608.7" width="2" height="6" fill="#555" rx="0.8"/>
<rect x="546.3" y="615.7" width="2" height="3" fill="#333" rx="0.8"/>
<rect x="550.3" y="616.7" width="2" height="2" fill="#444" rx="0.8"/>
<rect x="562.3" y="614.7" width="4" height="3" fill="#777" rx="0.8"/>
<rect x="570.3" y="614.7" width="3" height="4" fill="#999" rx="0.8"/>
<path d="M555.3,620.8000000000001 L557.3,618.3000000000001 L560.3,618.3000000000001 L562.3,620.8000000000001 Z" fill="#fff"/>
<text x="579.5999999999999" y="600.8000000000001" font-family="Liberation Sans" font-weight="bold" font-size="12" fill="#0a0a0a" stroke="#0a0a0a" stroke-width="0.32">Map #6</text>
<text x="580.0" y="619.0" font-family="Liberation Sans" font-weight="bold" font-size="12" fill="#0a0a0a" stroke="#0a0a0a" stroke-width="0.32">Bitmap</text>
<circle cx="590.7" cy="155.0" r="6.6" fill="#ccf200" stroke="#3c4a08" stroke-width="1"/>
<circle cx="568.7" cy="220.20000000000002" r="6.6" fill="#ccf200" stroke="#3c4a08" stroke-width="1"/>
<circle cx="438.7" cy="329.0" r="6.6" fill="#ccf200" stroke="#3c4a08" stroke-width="1"/>
<circle cx="438.7" cy="394.2" r="6.6" fill="#ccf200" stroke="#3c4a08" stroke-width="1"/>
<circle cx="655.4000000000001" cy="546.4" r="6.6" fill="#ccf200" stroke="#3c4a08" stroke-width="1"/>
<circle cx="655.4000000000001" cy="611.0" r="6.6" fill="#ccf200" stroke="#3c4a08" stroke-width="1"/>
<path d="M515,283.1 Q515,280.1 518,280.1 L666.3,280.1 Q669.3,280.1 669.3,283.1 L669.3,370.5 L660.3,379.5 L517,379.5 Q515,379.5 515,377.5 Z" fill="#151515" opacity="0.7" filter="url(#sh)"/>
<path d="M665.8,303.6 L671.8,303.6 Q676.8,303.6 676.8,308.6 L676.8,349.6 Q676.8,354.6 671.8,354.6 L665.8,354.6 Z" fill="#3a8d5c" stroke="#f0f0f0" stroke-width="1.3"/>
<path d="M514,282.1 Q514,278.6 517.5,278.6 L664.3,278.6 Q667.8,278.6 667.8,282.1 L667.8,368.5 L658.3,378 L516,378 Q514,378 514,376 Z" fill="#eee" stroke="#f4f4f4" stroke-width="1.6"/>
<clipPath id="c7"><path d="M514,282.1 Q514,278.6 517.5,278.6 L664.3,278.6 Q667.8,278.6 667.8,282.1 L667.8,368.5 L658.3,378 L516,378 Q514,378 514,376 Z"/></clipPath><g clip-path="url(#c7)">
<rect x="514" y="278.6" width="153.79999999999995" height="99.39999999999998" fill="url(#gRow)"/>
<rect x="514" y="278.6" width="153.79999999999995" height="43.799999999999955" fill="url(#gDG)"/>
<rect x="514" y="322.4" width="153.79999999999995" height="1.3" fill="#7a8088"/>
<rect x="520" y="343.2" width="141.79999999999995" height="1" fill="#6e7680"/>
<rect x="520" y="344.4" width="141.79999999999995" height="1.2" fill="#eef2f6"/>
<rect x="514" y="365.4" width="153.79999999999995" height="1" fill="#7a8088"/>
<rect x="514" y="366.4" width="153.79999999999995" height="3.4" fill="#cbd2d9"/>
<rect x="514" y="369.8" width="153.79999999999995" height="7.4" fill="url(#gFoot)"/>
</g>
<path d="M514,282.1 Q514,278.6 517.5,278.6 L664.3,278.6 Q667.8,278.6 667.8,282.1 L667.8,368.5 L658.3,378 L516,378 Q514,378 514,376 Z" fill="none" stroke="#f4f4f4" stroke-width="1.6"/>
<path d="M651.8,374 L655.8,370" stroke="#6a6e72" stroke-width="0.9"/>
<path d="M654.8,374 L658.8,370" stroke="#6a6e72" stroke-width="0.9"/>
<path d="M657.8,374 L661.8,370" stroke="#6a6e72" stroke-width="0.9"/>
<rect x="519" y="284" width="34.5" height="34.5" fill="#fff"/>
<path d="M524.2,285.2 L548.3000000000001,285.2 L552.3000000000001,289.2 L552.3000000000001,313.3 L548.3000000000001,317.3 L524.2,317.3 L520.2,313.3 L520.2,289.2 Z" fill="#7b7bfb"/>
<text x="557.6" y="296.8" font-family="Liberation Sans" font-weight="bold" font-size="12" fill="#f4f4e4" stroke="#f4f4e4" stroke-width="0.35">Map #7</text>
<text x="557.6" y="313.6" font-family="Liberation Sans" font-weight="bold" font-size="12" fill="#f4f4e4" stroke="#f4f4e4" stroke-width="0.35">VRayNor<tspan dx="1" letter-spacing="1.6">...</tspan></text>
<rect x="647" y="290" width="9.8" height="2" fill="#0c3a1c"/>
<text x="527" y="337" font-family="Liberation Sans" font-size="10.2" fill="#101418">Normal map</text>
<text x="527" y="357.8" font-family="Liberation Sans" font-size="10.2" fill="#101418">Bump map</text>
<circle cx="514.2" cy="334.3" r="6.6" fill="#ccf200" stroke="#3c4a08" stroke-width="1"/>
<circle cx="514.2" cy="355.1" r="6.6" fill="#ccf200" stroke="#3c4a08" stroke-width="1"/>
<circle cx="677.4" cy="328.7" r="6.6" fill="#ccf200" stroke="#3c4a08" stroke-width="1"/>
<path d="M754.6,174.3 Q754.6,171.3 757.6,171.3 L905.0,171.3 Q908.0,171.3 908.0,174.3 L908.0,607.1 L900.0,615.1 L756.6,615.1 Q754.6,615.1 754.6,613.1 Z" fill="#151515" opacity="0.7" filter="url(#sh)"/>
<path d="M904.5,281.6 L911.0,281.6 Q915.3,281.6 915.3,286 L915.3,499 Q915.3,503.4 911.0,503.4 L904.5,503.4 Z" fill="#5a8fc1" stroke="#1a1a1a" stroke-width="1.3"/>
<path d="M753.6,173.3 Q753.6,169.8 757.1,169.8 L903.0,169.8 Q906.5,169.8 906.5,173.3 L906.5,606.1 L899.0,613.6 L755.6,613.6 Q753.6,613.6 753.6,611.6 Z" fill="#1a1a1a" stroke="#1c1c1c" stroke-width="1.6"/>
<clipPath id="cV"><path d="M753.6,173.3 Q753.6,169.8 757.1,169.8 L903.0,169.8 Q906.5,169.8 906.5,173.3 L906.5,606.1 L899.0,613.6 L755.6,613.6 Q753.6,613.6 753.6,611.6 Z"/></clipPath><g clip-path="url(#cV)">
<rect x="753.6" y="169.8" width="152.89999999999998" height="443.8" fill="#bcc3cb"/>
<rect x="753.6" y="169.8" width="152.89999999999998" height="43.39999999999998" fill="url(#gBlue)"/>
<rect x="753.6" y="169.8" width="152.89999999999998" height="1.5" fill="#8ab8de"/>
<path d="M753.6,169.8 L845.6,169.8 L813.6,213.2 L753.6,213.2 Z" fill="#bc0a0e"/>
<rect x="753.6" y="212.8" width="152.89999999999998" height="1.2" fill="#6a7682"/>
<rect x="753.6" y="214.0" width="152.89999999999998" height="20.65" fill="url(#gRow)"/>
<rect x="753.6" y="234.65" width="152.89999999999998" height="20.65" fill="url(#gRow)"/>
<rect x="753.6" y="255.3" width="152.89999999999998" height="20.65" fill="url(#gRow)"/>
<rect x="753.6" y="275.95" width="152.89999999999998" height="20.65" fill="url(#gRow)"/>
<rect x="753.6" y="296.6" width="152.89999999999998" height="20.65" fill="url(#gRow)"/>
<rect x="753.6" y="317.25" width="152.89999999999998" height="20.65" fill="url(#gRow)"/>
<rect x="753.6" y="337.9" width="152.89999999999998" height="20.65" fill="url(#gRow)"/>
<rect x="753.6" y="358.54999999999995" width="152.89999999999998" height="20.65" fill="url(#gRow)"/>
<rect x="753.6" y="379.2" width="152.89999999999998" height="20.65" fill="url(#gRow)"/>
<rect x="753.6" y="399.85" width="152.89999999999998" height="20.65" fill="url(#gRow)"/>
<rect x="753.6" y="420.5" width="152.89999999999998" height="20.65" fill="url(#gRow)"/>
<rect x="753.6" y="441.15" width="152.89999999999998" height="20.65" fill="url(#gRow)"/>
<rect x="753.6" y="461.79999999999995" width="152.89999999999998" height="20.65" fill="url(#gRow)"/>
<rect x="753.6" y="482.45" width="152.89999999999998" height="20.65" fill="url(#gRow)"/>
<rect x="753.6" y="503.09999999999997" width="152.89999999999998" height="20.65" fill="url(#gRow)"/>
<rect x="753.6" y="523.75" width="152.89999999999998" height="20.65" fill="url(#gRow)"/>
<rect x="753.6" y="544.4" width="152.89999999999998" height="20.65" fill="url(#gRow)"/>
<rect x="753.6" y="565.05" width="152.89999999999998" height="20.65" fill="url(#gRow)"/>
<rect x="758.3" y="235.20" width="143" height="1" fill="#6c7580"/>
<rect x="758.3" y="236.40" width="143" height="1.2" fill="#eaeef2"/>
<rect x="758.3" y="255.85" width="143" height="1" fill="#6c7580"/>
<rect x="758.3" y="257.05" width="143" height="1.2" fill="#eaeef2"/>
<rect x="758.3" y="276.50" width="143" height="1" fill="#6c7580"/>
<rect x="758.3" y="277.70" width="143" height="1.2" fill="#eaeef2"/>
<rect x="758.3" y="297.15" width="143" height="1" fill="#6c7580"/>
<rect x="758.3" y="298.35" width="143" height="1.2" fill="#eaeef2"/>
<rect x="758.3" y="317.80" width="143" height="1" fill="#6c7580"/>
<rect x="758.3" y="319.00" width="143" height="1.2" fill="#eaeef2"/>
<rect x="758.3" y="338.45" width="143" height="1" fill="#6c7580"/>
<rect x="758.3" y="339.65" width="143" height="1.2" fill="#eaeef2"/>
<rect x="758.3" y="359.10" width="143" height="1" fill="#6c7580"/>
<rect x="758.3" y="360.30" width="143" height="1.2" fill="#eaeef2"/>
<rect x="758.3" y="379.75" width="143" height="1" fill="#6c7580"/>
<rect x="758.3" y="380.95" width="143" height="1.2" fill="#eaeef2"/>
<rect x="758.3" y="400.40" width="143" height="1" fill="#6c7580"/>
<rect x="758.3" y="401.60" width="143" height="1.2" fill="#eaeef2"/>
<rect x="758.3" y="421.05" width="143" height="1" fill="#6c7580"/>
<rect x="758.3" y="422.25" width="143" height="1.2" fill="#eaeef2"/>
<rect x="758.3" y="441.70" width="143" height="1" fill="#6c7580"/>
<rect x="758.3" y="442.90" width="143" height="1.2" fill="#eaeef2"/>
<rect x="758.3" y="462.35" width="143" height="1" fill="#6c7580"/>
<rect x="758.3" y="463.55" width="143" height="1.2" fill="#eaeef2"/>
<rect x="758.3" y="483.00" width="143" height="1" fill="#6c7580"/>
<rect x="758.3" y="484.20" width="143" height="1.2" fill="#eaeef2"/>
<rect x="758.3" y="503.65" width="143" height="1" fill="#6c7580"/>
<rect x="758.3" y="504.85" width="143" height="1.2" fill="#eaeef2"/>
<rect x="758.3" y="524.30" width="143" height="1" fill="#6c7580"/>
<rect x="758.3" y="525.50" width="143" height="1.2" fill="#eaeef2"/>
<rect x="758.3" y="544.95" width="143" height="1" fill="#6c7580"/>
<rect x="758.3" y="546.15" width="143" height="1.2" fill="#eaeef2"/>
<rect x="758.3" y="565.60" width="143" height="1" fill="#6c7580"/>
<rect x="758.3" y="566.80" width="143" height="1.2" fill="#eaeef2"/>
<rect x="753.6" y="169.8" width="1.5" height="443.8" fill="#e0e6ec" opacity="0.5"/>
<rect x="753.6" y="588.3" width="152.89999999999998" height="1" fill="#6e7680"/>
<rect x="753.6" y="589.3" width="152.89999999999998" height="11.4" fill="url(#gMr)"/>
<rect x="753.6" y="600.6" width="152.89999999999998" height="1" fill="#e8ecf0"/>
<rect x="753.6" y="601.6" width="152.89999999999998" height="4.6" fill="#c9d0d7"/>
<rect x="753.6" y="606.2" width="152.89999999999998" height="6.2" fill="url(#gFoot)"/>
<rect x="753.6" y="612.2" width="152.89999999999998" height="1.4" fill="#d8dadc"/>
</g>
<path d="M892.5,610.5 L896.5,606.5" stroke="#6a6e72" stroke-width="0.9"/>
<path d="M895.5,610.5 L899.5,606.5" stroke="#6a6e72" stroke-width="0.9"/>
<path d="M898.5,610.5 L902.5,606.5" stroke="#6a6e72" stroke-width="0.9"/>
<rect x="757.9" y="174.8" width="35.2" height="35" fill="#fff"/>
<rect x="759.2" y="176" width="32.6" height="32.6" fill="#8c8c8c"/>
<circle cx="775.5" cy="192.3" r="15.6" fill="url(#gSph)"/>
<circle cx="766" cy="188" r="1.6" fill="#ccc"/>
<text x="797.4" y="187.4" font-family="Liberation Sans" font-weight="bold" font-size="12" fill="#3a0204" stroke="#3a0204" stroke-width="0.4">Sniper</text>
<text x="797.4" y="205.6" font-family="Liberation Sans" font-weight="bold" font-size="12" fill="#10080c" stroke="#10080c" stroke-width="0.4">VRayMtl</text>
<rect x="886.4" y="181" width="9.4" height="2" fill="#1a3a5c"/>
<text x="766.2" y="228.80" font-family="Liberation Sans" font-size="10.6" fill="#0e1216">Diffuse map</text>
<text x="766.2" y="249.45" font-family="Liberation Sans" font-size="10.6" fill="#0e1216">Reflect map</text>
<text x="766.2" y="270.10" font-family="Liberation Sans" font-size="10.6" fill="#0e1216">Refract map</text>
<text x="766.2" y="290.75" font-family="Liberation Sans" font-size="10.6" fill="#0e1216">Bump map</text>
<text x="766.2" y="311.40" font-family="Liberation Sans" font-size="10.6" fill="#0e1216">Refl. gloss.</text>
<text x="766.2" y="332.05" font-family="Liberation Sans" font-size="10.6" fill="#0e1216">Refr. gloss.</text>
<text x="766.2" y="352.70" font-family="Liberation Sans" font-size="10.6" fill="#0e1216">Displacement</text>
<text x="766.2" y="373.35" font-family="Liberation Sans" font-size="10.6" fill="#0e1216">Environment</text>
<text x="766.2" y="394.00" font-family="Liberation Sans" font-size="10.6" fill="#0e1216">Translucency</text>
<text x="766.2" y="414.65" font-family="Liberation Sans" font-size="10.6" fill="#0e1216">IOR</text>
<text x="766.2" y="435.30" font-family="Liberation Sans" font-size="10.6" fill="#0e1216">Hilight gloss</text>
<text x="766.2" y="455.95" font-family="Liberation Sans" font-size="10.6" fill="#0e1216">Fresnel IOR</text>
<text x="766.2" y="476.60" font-family="Liberation Sans" font-size="10.6" fill="#0e1216">Opacity</text>
<text x="766.2" y="497.25" font-family="Liberation Sans" font-size="10.6" fill="#0e1216">Roughness</text>
<text x="766.2" y="517.90" font-family="Liberation Sans" font-size="10.6" fill="#0e1216">Anisotropy</text>
<text x="766.2" y="538.55" font-family="Liberation Sans" font-size="10.6" fill="#0e1216">An. rotation</text>
<text x="766.2" y="559.20" font-family="Liberation Sans" font-size="10.6" fill="#0e1216">Fog color</text>
<text x="766.2" y="579.85" font-family="Liberation Sans" font-size="10.6" fill="#0e1216">Self-illum</text>
<circle cx="753.6" cy="225.6" r="6.6" fill="#ccf200" stroke="#3c4a08" stroke-width="1"/>
<circle cx="753.6" cy="246.25" r="6.6" fill="#ccf200" stroke="#3c4a08" stroke-width="1"/>
<circle cx="753.6" cy="266.9" r="6.6" fill="#b9c1c9" stroke="#5c6670" stroke-width="1"/>
<circle cx="753.6" cy="287.55" r="6.6" fill="#ccf200" stroke="#3c4a08" stroke-width="1"/>
<circle cx="753.6" cy="308.2" r="6.6" fill="#b9c1c9" stroke="#5c6670" stroke-width="1"/>
<circle cx="753.6" cy="328.85" r="6.6" fill="#b9c1c9" stroke="#5c6670" stroke-width="1"/>
<circle cx="753.6" cy="349.5" r="6.6" fill="#b9c1c9" stroke="#5c6670" stroke-width="1"/>
<circle cx="753.6" cy="370.15" r="6.6" fill="#b9c1c9" stroke="#5c6670" stroke-width="1"/>
<circle cx="753.6" cy="390.8" r="6.6" fill="#b9c1c9" stroke="#5c6670" stroke-width="1"/>
<circle cx="753.6" cy="411.45" r="6.6" fill="#b9c1c9" stroke="#5c6670" stroke-width="1"/>
<circle cx="753.6" cy="432.1" r="6.6" fill="#b9c1c9" stroke="#5c6670" stroke-width="1"/>
<circle cx="753.6" cy="452.75" r="6.6" fill="#ccf200" stroke="#3c4a08" stroke-width="1"/>
<circle cx="753.6" cy="473.4" r="6.6" fill="#b9c1c9" stroke="#5c6670" stroke-width="1"/>
<circle cx="753.6" cy="494.05" r="6.6" fill="#ccf200" stroke="#3c4a08" stroke-width="1"/>
<circle cx="753.6" cy="514.7" r="6.6" fill="#b9c1c9" stroke="#5c6670" stroke-width="1"/>
<circle cx="753.6" cy="535.35" r="6.6" fill="#b9c1c9" stroke="#5c6670" stroke-width="1"/>
<circle cx="753.6" cy="556.0" r="6.6" fill="#b9c1c9" stroke="#5c6670" stroke-width="1"/>
<circle cx="753.6" cy="576.65" r="6.6" fill="#b9c1c9" stroke="#5c6670" stroke-width="1"/>
<text x="821.5" y="599.2" text-anchor="middle" font-family="Liberation Sans" font-weight="bold" font-size="10.4" fill="#14181c">mr Connection</text>
<path d="M892.2,596 L898.6,596 M895.4,592.8 L895.4,599.2" stroke="#8a9096" stroke-width="1.4"/>
<circle cx="916.7" cy="391.9" r="6.6" fill="#b9c1c9" stroke="#5c6670" stroke-width="1"/>
<path d="M1053.5,292.8 L1053.5,305 L1056.3,302.3 L1058.6,307.5 L1060.4,306.7 L1058.2,301.6 L1062,301.6 Z" fill="#fff" stroke="#000" stroke-width="0.9"/>
<path d="M144,764 L144,746 Q144,745 145,745 L162,745 L164.5,747 L164.5,764" fill="none" stroke="#585858" stroke-width="0.8"/>
<path d="M148.2,761 L148.2,753 Q148.5,750.5 151,750 L152.2,752 L152.2,761 Z M159.2,761 L159.2,753 Q158.9,750.5 156.4,750 L155.2,752 L155.2,761 Z" fill="#f0f0f0"/>
<path d="M152.4,751 L155,757 M155,751 L152.4,757" stroke="#111" stroke-width="0.9"/>
<circle cx="153.7" cy="754.3" r="0.9" fill="#fff"/>
</svg>
</body></html>
